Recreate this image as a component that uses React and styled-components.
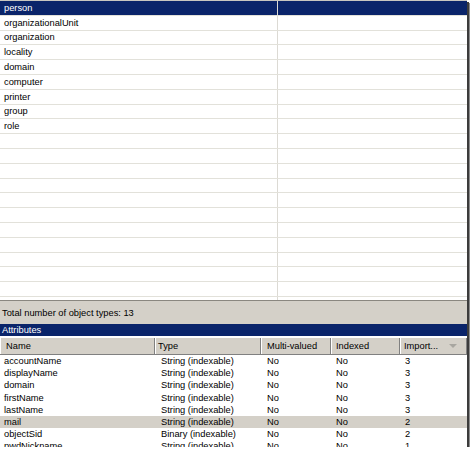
import React from "react";
import styled, { createGlobalStyle } from "styled-components";

const Global = createGlobalStyle`
  html, body {
    margin: 0;
    padding: 0;
    background: #ffffff;
  }
  body {
    font-family: "Liberation Sans", Arial, sans-serif;
    font-size: 9.3px;
    color: #000;
  }
`;

const Frame = styled.div`
  width: 467px;
  height: 447px;
  display: flex;
  flex-direction: column;
  overflow: hidden;
  background: #fff;
  border-top: 1px solid #c8c6c0;
  box-sizing: border-box;
  box-shadow: 2px 2px 0 #3c3c3c, 3px 3px 0 #8c8c8c;
`;

const ListPane = styled.div`
  height: 299px;
  flex: none;
  overflow: hidden;
  background: #fff;
`;

const ListRow = styled.div`
  display: grid;
  grid-template-columns: 278px 1fr;
  height: 14.8px;
  box-sizing: border-box;
  border-bottom: 1px solid #e2e1da;
  background: ${({ $selected }) => ($selected ? "#0a246a" : "#fff")};
  color: ${({ $selected }) => ($selected ? "#fff" : "#000")};
`;

const ListCell = styled.div`
  display: flex;
  align-items: center;
  padding-left: ${({ $first }) => ($first ? "4px" : "0")};
  border-right: ${({ $first }) => ($first ? "1px solid #dcdad4" : "none")};
  white-space: nowrap;
  overflow: hidden;
`;

const StatusBar = styled.div`
  height: 24px;
  flex: none;
  display: flex;
  align-items: center;
  padding-left: 2px;
  background: #d4d0c8;
  border-top: 1px solid #8a8780;
  box-sizing: border-box;
`;

const SectionBar = styled.div`
  height: 12px;
  flex: none;
  display: flex;
  align-items: center;
  padding-left: 2px;
  background: #0a246a;
  color: #fff;
`;

const Table = styled.div`
  flex: 1;
  display: flex;
  flex-direction: column;
  overflow: hidden;
  padding-top: 1px;
`;

const cols = "155px 106px 70px 69px 1fr";

const HeaderRow = styled.div`
  display: grid;
  grid-template-columns: ${cols};
  height: 18px;
  flex: none;
  background: #d4d0c8;
  border-top: 1px solid #fff;
  border-bottom: 1px solid #808080;
  box-sizing: border-box;
`;

const HeaderCell = styled.div`
  display: flex;
  align-items: center;
  justify-content: space-between;
  padding: 0 9px 0 ${({ $pad }) => $pad || 5}px;
  border-left: 1px solid #fff;
  border-right: 1px solid #808080;
  white-space: nowrap;
`;

const SortArrow = styled.span`
  width: 0;
  height: 0;
  border-left: 4px solid transparent;
  border-right: 4px solid transparent;
  border-top: 4px solid #a8a6a0;
`;

const DataRow = styled.div`
  display: grid;
  grid-template-columns: ${cols};
  height: 12.2px;
  flex: none;
  background: ${({ $selected }) => ($selected ? "#d4d0c8" : "#fff")};
`;

const DataCell = styled.div`
  display: flex;
  align-items: center;
  padding-left: ${({ $pad }) => $pad || 5}px;
  white-space: nowrap;
  overflow: hidden;
`;

const types = [
  "person",
  "organizationalUnit",
  "organization",
  "locality",
  "domain",
  "computer",
  "printer",
  "group",
  "role",
];

const attrs = [
  ["accountName", "String (indexable)", "No", "No", "3"],
  ["displayName", "String (indexable)", "No", "No", "3"],
  ["domain", "String (indexable)", "No", "No", "3"],
  ["firstName", "String (indexable)", "No", "No", "3"],
  ["lastName", "String (indexable)", "No", "No", "3"],
  ["mail", "String (indexable)", "No", "No", "2"],
  ["objectSid", "Binary (indexable)", "No", "No", "2"],
  ["pwdNickname", "String (indexable)", "No", "No", "1"],
];

export default function App() {
  const rows = Array.from({ length: 21 }, (_, i) => types[i] || "");
  return (
    <>
      <Global />
      <Frame>
        <ListPane>
          {rows.map((t, i) => (
            <ListRow key={i} $selected={i === 0}>
              <ListCell $first>{t}</ListCell>
              <ListCell />
            </ListRow>
          ))}
        </ListPane>
        <StatusBar>Total number of object types: 13</StatusBar>
        <SectionBar>Attributes</SectionBar>
        <Table>
          <HeaderRow>
            <HeaderCell $pad={5}>Name</HeaderCell>
            <HeaderCell $pad={2}>Type</HeaderCell>
            <HeaderCell $pad={5}>Multi-valued</HeaderCell>
            <HeaderCell $pad={4}>Indexed</HeaderCell>
            <HeaderCell $pad={3}>
              Import...
              <SortArrow />
            </HeaderCell>
          </HeaderRow>
          {attrs.map((a) => (
            <DataRow key={a[0]} $selected={a[0] === "mail"}>
              <DataCell $pad={4}>{a[0]}</DataCell>
              <DataCell $pad={6}>{a[1]}</DataCell>
              <DataCell $pad={6}>{a[2]}</DataCell>
              <DataCell $pad={5}>{a[3]}</DataCell>
              <DataCell $pad={5}>{a[4]}</DataCell>
            </DataRow>
          ))}
        </Table>
      </Frame>
    </>
  );
}
